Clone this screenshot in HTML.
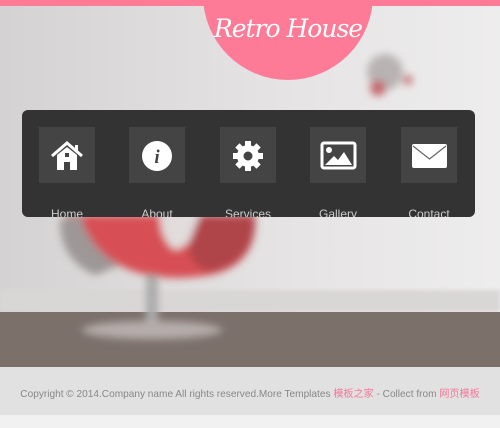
<!DOCTYPE html>
<html><head><meta charset="utf-8"><style>
html,body{margin:0;padding:0;width:500px;height:428px;overflow:hidden;font-family:"Liberation Sans",sans-serif}
#bg{position:absolute;left:0;top:0;width:500px;height:428px}
.top{position:absolute;left:0;top:0;width:500px;height:6px;background:#fd7b97}
.circ{position:absolute;left:203px;top:-90px;width:170px;height:170px;border-radius:50%;background:#fd7b97}
.logo{position:absolute;left:203px;top:14px;width:170px;text-align:center;color:#fff;font-family:"DejaVu Serif","Liberation Serif",serif;font-style:italic;font-size:25px;letter-spacing:-1px}
.panel{position:absolute;left:22px;top:110px;width:453px;height:107px;background:#333;border-radius:6px;overflow:hidden}
.item{position:absolute;top:17px;width:56px;height:56px;background:#444}
.lbl{position:absolute;top:97px;width:90px;text-align:center;color:#ccc;font-size:12px}
.foot{position:absolute;left:0;top:367px;width:500px;height:48px;background:#e2e1e1}
.ft{position:absolute;left:0;top:385px;width:500px;text-align:center;font-size:10.1px;color:#888;white-space:nowrap}
.ft span{color:#f2789a}
.bot{position:absolute;left:0;top:415px;width:500px;height:13px;background:#f1f1f1}
</style></head><body>
<svg id="bg" width="500" height="428" viewBox="0 0 500 428">
<defs>
<linearGradient id="g" x1="0" y1="0" x2="1" y2="0"><stop offset="0" stop-color="#d4d2d2"/><stop offset="0.6" stop-color="#e6e4e4"/><stop offset="1" stop-color="#eeeded"/></linearGradient>
<filter id="b"><feGaussianBlur stdDeviation="4"/></filter>
<filter id="b2"><feGaussianBlur stdDeviation="2"/></filter>
</defs>
<rect width="500" height="312" fill="url(#g)"/>
<rect y="290" width="500" height="22" fill="#d9d6d6" filter="url(#b2)"/>
<rect y="312" width="500" height="55" fill="#7c706b"/>
<g filter="url(#b)">
<circle cx="385" cy="72" r="18" fill="#b9b2b3"/>
<circle cx="378" cy="88" r="8" fill="#c46a70"/>
<circle cx="408" cy="80" r="5" fill="#c67a80"/>
<path d="M65 215 L255 215 Q258 265 210 275 Q150 285 110 260 Q85 245 65 215Z" fill="#d75055"/>
<path d="M80 215 Q90 250 120 265 L95 275 Q60 260 60 220Z" fill="#9e9797"/>
<path d="M160 215 L200 215 Q195 245 175 250 Q160 240 160 215Z" fill="#e2dcdc"/>
<path d="M200 215 L255 215 Q258 262 210 272 Q185 265 190 240Z" fill="#b0454a"/>
<rect x="146" y="275" width="12" height="52" fill="#aaa"/>
<ellipse cx="152" cy="330" rx="70" ry="9" fill="#b5adab"/>
</g>
</svg>
<div class="top"></div>
<div class="circ"></div>
<div class="logo">Retro House</div>
<div class="panel">
<div class="item" style="left:17px"><svg width="56" height="56"><path d="M13 29 L28 16 L43 29" stroke="#fff" stroke-width="3" fill="none"/><path d="M18 28 L28 20 L38 28 V43 H31 V35 H25 V43 H18Z" fill="#fff"/><rect x="36" y="18" width="3" height="7" fill="#fff"/><rect x="26" y="26" width="4" height="4" fill="#444"/></svg></div>
<div class="item" style="left:107px"><svg width="56" height="56"><circle cx="28" cy="29" r="15" fill="#fff"/><text x="28" y="36" text-anchor="middle" font-family="Liberation Serif" font-style="italic" font-weight="bold" font-size="19" fill="#444">i</text></svg></div>
<div class="item" style="left:198px"><svg width="56" height="56"><g fill="#fff" transform="translate(28 29)"><circle r="11"/><g><rect x="-3" y="-15" width="6" height="30"/><rect x="-3" y="-15" width="6" height="30" transform="rotate(45)"/><rect x="-3" y="-15" width="6" height="30" transform="rotate(90)"/><rect x="-3" y="-15" width="6" height="30" transform="rotate(135)"/></g><circle r="4.5" fill="#444"/></g></svg></div>
<div class="item" style="left:288px"><svg width="56" height="56"><rect x="12" y="16" width="33" height="25" rx="2" fill="none" stroke="#fff" stroke-width="3"/><circle cx="19" cy="23" r="3" fill="#fff"/><path d="M15 38 L24 29 L28 33 L34 25 L42 38Z" fill="#fff"/></svg></div>
<div class="item" style="left:379px"><svg width="56" height="56"><rect x="11" y="17" width="35" height="24" rx="2" fill="#fff"/><path d="M12 19 L28.5 32 L45 19" stroke="#666" stroke-width="1.2" fill="none"/></svg></div>
<div class="lbl" style="left:0px">Home</div>
<div class="lbl" style="left:90px">About</div>
<div class="lbl" style="left:181px">Services</div>
<div class="lbl" style="left:271px">Gallery</div>
<div class="lbl" style="left:362px">Contact</div>
</div>
<div class="foot"></div>
<div class="ft">Copyright © 2014.Company name All rights reserved.More Templates <span style="font-family:'Liberation Sans','Noto Sans CJK SC',sans-serif">模板之家</span> - Collect from <span style="font-family:'Liberation Sans','Noto Sans CJK SC',sans-serif">网页模板</span></div>
<div class="bot"></div>
</body></html>
